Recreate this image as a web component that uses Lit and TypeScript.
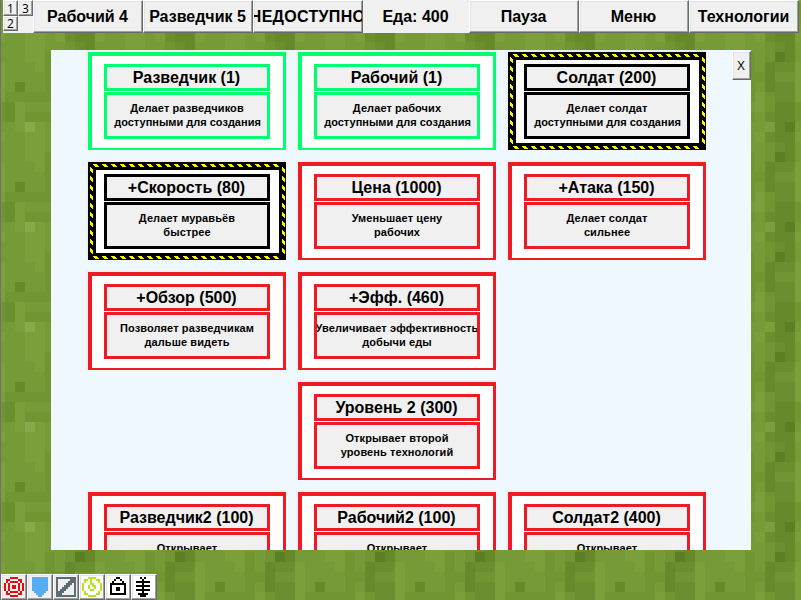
import { LitElement, html, svg, css } from "lit";
import { customElement, property } from "lit/decorators.js";

// Grass tile: 10x10 cells of 10px, digits index the shade list.
const SHADES = ["#5b8023", "#66892c", "#6b8f30", "#709532", "#759a37", "#7b9f3b", "#86ab4a"];
const GRASS = [
  "2544453113",
  "2533342113",
  "4565445104",
  "4455452115",
  "4455443214",
  "4455343014",
  "4445341225",
  "4444331335",
  "4144341225",
  "3333353225",
];

// 10x10 bitmaps, each cell is a 2px square.
const ICONS: Record<string, { color: string; bg: string; rows: string[] }> = {
  target: {
    color: "#e30c10", bg: "#f0f0f0",
    rows: [
      "...####...", ".##....##.", ".#.####.#.", "#.#....#.#", "#.#.##.#.#",
      "#.#.##.#.#", "#.#....#.#", ".#.####.#.", ".##....##.", "...####...",
    ],
  },
  shield: {
    color: "#55acee", bg: "#f0f0f0",
    rows: [
      ".########.", ".########.", ".########.", ".########.", ".########.",
      ".########.", ".########.", "..######..", "...####...", "....##....",
    ],
  },
  slash: {
    color: "#5d6b73", bg: "#f0f0f0",
    rows: [
      "##########", "#......###", "#.....####", "#....###.#", "#...###..#",
      "#..###...#", "#.###....#", "####.....#", "###......#", "##########",
    ],
  },
  power: {
    color: "#b5e61d", bg: "#ffffff",
    rows: [
      "...####...", ".##.#..##.", ".#..#...#.", "#...##...#", "#..#.##..#",
      "#..#..#..#", "#...##...#", ".#......#.", ".##....##.", "...####...",
    ],
  },
  lock: {
    color: "#000000", bg: "#ffffff",
    rows: [
      "....##....", "...#..#...", "..#....#..", ".########.", ".#......#.",
      ".#..##..#.", ".#..##..#.", ".#......#.", ".########.", "..........",
    ],
  },
  spine: {
    color: "#000000", bg: "#ffffff",
    rows: [
      "...#.#....", "....#.....", ".#######..", "....#.....", ".#######..",
      "....#.....", ".#######..", "....#.....", "..#####...", "...###....",
    ],
  },
};

type Status = "done" | "open" | "locked";
interface Tech { title: string; lines: string[]; status: Status; tight?: boolean }
const TECHS: (Tech | null)[] = [
  { title: "Разведчик (1)", lines: ["Делает разведчиков", "доступными для создания"], status: "done", tight: true },
  { title: "Рабочий (1)", lines: ["Делает рабочих", "доступными для создания"], status: "done", tight: true },
  { title: "Солдат (200)", lines: ["Делает солдат", "доступными для создания"], status: "open", tight: true },
  { title: "+Скорость (80)", lines: ["Делает муравьёв", "быстрее"], status: "open" },
  { title: "Цена (1000)", lines: ["Уменьшает цену", "рабочих"], status: "locked" },
  { title: "+Атака (150)", lines: ["Делает солдат", "сильнее"], status: "locked" },
  { title: "+Обзор (500)", lines: ["Позволяет разведчикам", "дальше видеть"], status: "locked" },
  { title: "+Эфф. (460)", lines: ["Увеличивает эффективность", "добычи еды"], status: "locked" },
  null,
  null,
  { title: "Уровень 2 (300)", lines: ["Открывает второй", "уровень технологий"], status: "locked" },
  null,
  { title: "Разведчик2 (100)", lines: ["Открывает", "разведчиков"], status: "locked" },
  { title: "Рабочий2 (100)", lines: ["Открывает", "рабочих"], status: "locked" },
  { title: "Солдат2 (400)", lines: ["Открывает", "солдат"], status: "locked" },
];

@customElement("pixel-icon")
class PixelIcon extends LitElement {
  @property() name = "target";
  static styles = css`
    :host { display: block; width: 20px; height: 20px; flex: none; }
    svg { display: block; }
  `;
  render() {
    const icon = ICONS[this.name];
    const cells = icon.rows.flatMap((row, y) =>
      [...row].map((c, x) => (c === "#" ? `M${x} ${y}h1v1h-1z` : "")));
    return html`<svg width="20" height="20" viewBox="0 0 10 10" shape-rendering="crispEdges">
      <path d=${cells.join("")} fill=${icon.color}></path>
    </svg>`;
  }
}

@customElement("tech-card")
class TechCard extends LitElement {
  @property({ attribute: false }) tech!: Tech;
  static styles = css`
    :host { display: block; }
    .wrap { width: 198px; height: 98px; border-left: 2px solid #f0f0f0; border-top: 2px solid #f0f0f0; }
    .card { position: relative; box-sizing: border-box; width: 198px; height: 98px; background: #fff;
      border-style: solid; border-width: 4px 3px 2px 4px; border-color: var(--c);
      padding: 8px 0 0 12px; --c: #ed1c24; }
    .done { --c: #00ff6e; }
    .open { --c: #000; border-width: 8px 7px 7px 8px; padding: 4px 0 0 8px; }
    .title, .desc { box-sizing: border-box; width: 166px; border: 3px solid var(--c); background: #f0f0f0;
      overflow: hidden; display: flex; flex-direction: column; align-items: center;
      justify-content: center; font-weight: bold; white-space: nowrap; color: #000; }
    .title { height: 27px; font-size: 16px; line-height: 20px; padding-right: 1px; }
    .desc { height: 47px; margin-top: 1px; padding-bottom: 2px; font-size: 11px; line-height: 14px; letter-spacing: 0.1px; }
    .tight { letter-spacing: 0; padding-left: 1px; }
    .hazard { position: absolute; left: -8px; top: -8px; }
  `;
  render() {
    const t = this.tech;
    return html`<div class="wrap"><div class="card ${t.status}">
      ${t.status === "open" ? html`<svg class="hazard" width="198" height="98" shape-rendering="crispEdges">
        <defs>
          <pattern id="h" x="5" y="2" width="9" height="92" patternUnits="userSpaceOnUse">
            <path d="M0 0h4v1h-4zM1 1h4v1h-4zM2 2h4v1h-4z" fill="#fff200"></path>
          </pattern>
          <pattern id="v" x="2" y="5" width="192" height="9" patternUnits="userSpaceOnUse">
            <path d="M0 0h1v4h-1zM1 1h1v4h-1zM2 2h1v4h-1z" fill="#fff200"></path>
          </pattern>
        </defs>
        <rect x="4" y="2" width="189" height="3" fill="url(#h)"></rect>
        <rect x="4" y="94" width="189" height="3" fill="url(#h)"></rect>
        <rect x="2" y="5" width="3" height="88" fill="url(#v)"></rect>
        <rect x="194" y="5" width="3" height="88" fill="url(#v)"></rect>
      </svg>` : ""}
      <div class="title">${t.title}</div>
      <div class="desc">${t.lines.map((l, i) => html`<div class=${t.tight && i === 1 ? "tight" : ""}>${l}</div>`)}</div>
    </div></div>`;
  }
}

@customElement("app-root")
class AppRoot extends LitElement {
  static styles = css`
    :host { display: block; width: 801px; height: 600px; overflow: hidden; position: relative;
      font-family: "Liberation Sans", Arial, sans-serif; color: #000; }
    .grass { position: absolute; inset: 0; }
    .screen { position: relative; box-sizing: border-box; width: 801px; height: 600px;
      border-left: 1px solid #707070; display: flex; flex-direction: column; }
    .bar { display: flex; height: 33px; padding-left: 2px; }
    .btn { box-sizing: border-box; background: #f0f0f0; border: 1px solid; white-space: nowrap;
      border-color: #fff #696969 #696969 #fff; box-shadow: inset -1px -1px #a0a0a0, inset 1px 1px #e3e3e3;
      display: flex; align-items: center; justify-content: center; overflow: hidden; }
    .groups { width: 30px; height: 33px; background: #f0f0f0; display: grid;
      grid-template: 16px 15px / 15px 15px; }
    .small { font: 12px "Open Sans", "Noto Sans", sans-serif; line-height: 13px; }
    .big { width: 110px; height: 33px; padding-right: 1px; font-weight: bold; font-size: 16px; }
    .off { letter-spacing: 0.3px; }
    .food { width: 106px; padding-right: 1px; box-sizing: border-box; background: #f0f0f0; font-weight: bold;
      font-size: 16px; display: flex; align-items: center; justify-content: center; }
    .panel { box-sizing: border-box; width: 700px; height: 500px; margin: 17px 0 0 50px;
      background: #f0f8ff; overflow: hidden; display: flex; padding-left: 35px; }
    .grid { display: grid; grid-template-columns: repeat(3, 210px); grid-auto-rows: 110px; width: 630px; }
    .close { width: 19px; height: 29px; margin: 1px 0 0 16px; padding: 0 1px 2px 0; flex: none;
      font: 13px "Open Sans", "Noto Sans", sans-serif; }
    .tools { display: flex; margin-top: 24px; }
    .tool { width: 26px; height: 26px; }
  `;

  render() {
    const big = (t: string, off = false) => html`<div class="btn big ${off ? "off" : ""}">${t}</div>`;
    return html`
      <svg class="grass" width="801" height="600" shape-rendering="crispEdges">
        <defs><pattern id="g" x="5" y="2" width="100" height="100" patternUnits="userSpaceOnUse">
          ${GRASS.map((row, y) => [...row].map((c, x) => svg`<rect x=${x * 10} y=${y * 10} width="10" height="10" fill=${SHADES[+c]}></rect>`))}
        </pattern></defs>
        <rect width="801" height="600" fill="url(#g)"></rect>
      </svg>
      <div class="screen">
        <div class="bar">
          <div class="groups">${["1", "3", "2"].map((n) => html`<div class="btn small">${n}</div>`)}</div>
          ${big("Рабочий 4")}${big("Разведчик 5")}${big("НЕДОСТУПНО", true)}
          <div class="food">Еда: 400</div>
          ${big("Пауза")}${big("Меню")}${big("Технологии")}
        </div>
        <div class="panel">
          <div class="grid">${TECHS.map((t) => (t ? html`<tech-card .tech=${t}></tech-card>` : html`<div></div>`))}</div>
          <div class="btn close">X</div>
        </div>
        <div class="tools">${Object.keys(ICONS).map((n) => html`
          <div class="btn tool" style="background:${ICONS[n].bg}"><pixel-icon name=${n}></pixel-icon></div>`)}</div>
      </div>`;
  }
}
